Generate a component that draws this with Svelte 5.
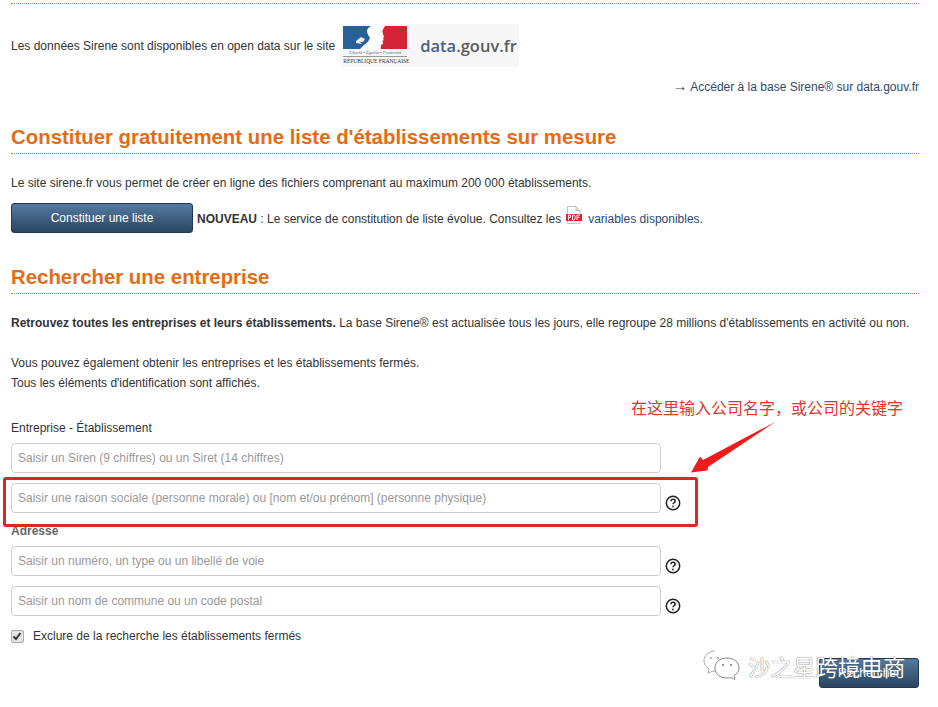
<script>
	const addressFields = [
		'Saisir un numéro, un type ou un libellé de voie',
		'Saisir un nom de commune ou un code postal'
	];
</script>

{#snippet help()}
	<svg class="help" width="16" height="16" viewBox="0 0 16 16" aria-hidden="true">
		<circle cx="8" cy="8" r="6.7" fill="#fff" stroke="#222" stroke-width="1.5" />
		<path d="M5.9 6.2c.1-1.3 1-2 2.2-2s2.1.7 2.1 1.8c0 .9-.5 1.3-1.1 1.7-.6.4-1 .8-1 1.6" fill="none" stroke="#222" stroke-width="1.5" />
		<rect x="7.2" y="10.7" width="1.6" height="1.6" fill="#222" />
	</svg>
{/snippet}

<div class="page">
	<div class="top-rule"></div>

	<div class="opendata">
		<span>Les données Sirene sont disponibles en open data sur le site</span>
		<div class="logo">
			<div class="marianne">
				<svg width="64" height="23" viewBox="0 0 64 23" aria-hidden="true">
					<rect x="0" y="0" width="28" height="23" fill="#2a6099" />
					<path d="M42 0H64V23H37l.500-4 2.500-1-1-3 2-1-2-3c1-2-1-3-.500-5z" fill="#d12535" />
					<path d="M28 0h14c-3 2-3 5-2 8l1 3-2 3 1 3-2 2-.500 4H17l4-4c3-2 5-4 6-7-1-2-3-4-3-7 0-2 2-4 4-5z" fill="#fff" />
					<path d="M13 15l5-4 4 2-2 3-3 0 2 2-6-1z" fill="#fff" opacity=".9" />
				</svg>
				<div class="devise">Liberté • Égalité • Fraternité</div>
				<div class="republique">RÉPUBLIQUE FRANÇAISE</div>
			</div>
			<div class="wordmark"><span class="d">data.</span><span class="g">gouv.fr</span></div>
		</div>
	</div>

	<p class="access"><span class="arrow">→</span> <a href="#top">Accéder à la base Sirene® sur data.gouv.fr</a></p>

	<h2 class="first">Constituer gratuitement une liste d'établissements sur mesure</h2>
	<p class="intro">Le site sirene.fr vous permet de créer en ligne des fichiers comprenant au maximum 200 000 établissements.</p>

	<div class="liste-row">
		<button class="btn liste">Constituer une liste</button>
		<span class="news"><b>NOUVEAU</b> : Le service de constitution de liste évolue. Consultez les</span>
		<svg class="pdf" width="16" height="18" viewBox="0 0 16 18" aria-hidden="true">
			<path d="M1.500 .5h8.500l4 4v13h-12.500z" fill="#fff" stroke="#c4c4c4" />
			<path d="M10 .5v4h4" fill="#e4e4e4" stroke="#bbb" />
			<rect x="0" y="8" width="16" height="7" fill="#c9302b" />
			<path d="M2.500 14v-5h2v2.500h-2M6.500 9v5h1.500l1-1v-3l-1-1zM11 14v-5h3M11 11.300h2.500" fill="none" stroke="#fff" stroke-width=".9" />
		</svg>
		<a class="vars" href="#top">variables disponibles.</a>
	</div>

	<h2>Rechercher une entreprise</h2>
	<p class="lead"><b>Retrouvez toutes les entreprises et leurs établissements.</b> La base Sirene® est actualisée tous les jours, elle regroupe 28 millions d'établissements en activité ou non.</p>
	<p class="lead-2">Vous pouvez également obtenir les entreprises et les établissements fermés.<br />Tous les éléments d'identification sont affichés.</p>

	<form class="search" onsubmit={(e) => e.preventDefault()}>
		<div class="form-label">Entreprise - Établissement</div>
		<div class="field"><input placeholder="Saisir un Siren (9 chiffres) ou un Siret (14 chiffres)" /></div>
		<div class="field"><input placeholder="Saisir une raison sociale (personne morale) ou [nom et/ou prénom] (personne physique)" />{@render help()}</div>

		<div class="form-label adresse">Adresse</div>
		{#each addressFields as placeholder}
			<div class="field"><input {placeholder} />{@render help()}</div>
		{/each}

		<label class="exclude">
			<span class="box">
				<input type="checkbox" checked />
				<svg width="12" height="12" viewBox="0 0 12 12" aria-hidden="true"><path d="M2.500 6.500l2.500 2.500 4.500-6" fill="none" stroke="#333" stroke-width="2" /></svg>
			</span>
			<span>Exclure de la recherche les établissements fermés</span>
		</label>

		<div class="submit"><button class="btn go">Rechercher</button></div>
	</form>

	<!-- annotations posees sur la capture -->
	<div class="redbox"></div>
	<div class="note">在这里输入公司名字，或公司的关键字</div>
	<svg class="note-arrow" width="90" height="56" viewBox="0 0 90 56" aria-hidden="true">
		<path d="M86 1.500L13 40l-3-3.500L1 52.500l16.500-2L18 47z" fill="#ee1c1c" />
	</svg>

	<div class="watermark">
		<svg width="38" height="31" viewBox="0 0 38 31" aria-hidden="true">
			<path d="M12 1C6 1 1 5 1 11c0 3 2 6 5 8l-1 4 5-2c1 0 2 .5 3 .5" fill="#fff" stroke="#aaa" />
			<path d="M24 8c-7 0-12 4-12 10s5 10 12 10c2 0 3 0 4-.5l4 2-1-4c3-2 5-4 5-7.500 0-6-5-10-12-10z" fill="#fff" stroke="#888" />
			<circle cx="8" cy="8" r="1.200" fill="#bbb" /><circle cx="15" cy="8" r="1.200" fill="#bbb" />
			<circle cx="20" cy="15" r="1.200" fill="#999" /><circle cx="28" cy="15" r="1.200" fill="#999" />
		</svg>
		<span>沙之星跨境电商</span>
	</div>
</div>

<style>
	:global(body) {
		margin: 0;
		background: #fff;
	}

	.page {
		position: relative;
		height: 707px;
		overflow: hidden;
		box-sizing: border-box;
		padding: 0 19px 0 11px;
		font-family: 'Liberation Sans', Arial, sans-serif;
		font-size: 12px;
		color: #333;
	}

	.top-rule {
		height: 3px;
		border-bottom: 1px dotted #b07a2a;
	}

	a {
		color: #2d4a6b;
		text-decoration: none;
	}

	.opendata {
		display: flex;
		align-items: center;
		gap: 6px;
		margin-top: 20px;
		height: 43px;
	}

	.logo {
		display: flex;
		align-items: center;
		width: 178px;
		height: 43px;
		background: #f7f7f7;
	}

	.marianne {
		width: 64px;
		margin-left: 2px;
	}

	.marianne svg {
		display: block;
	}

	.devise {
		margin-top: 1px;
		font-family: 'Liberation Serif', serif;
		font-style: italic;
		font-size: 4.500px;
		line-height: 6px;
		white-space: nowrap;
		text-align: center;
		color: #666;
		border-bottom: 1px solid #999;
	}

	.republique {
		font-family: 'Liberation Serif', serif;
		font-size: 5.500px;
		line-height: 8px;
		white-space: nowrap;
		text-align: center;
		color: #333;
	}

	.wordmark {
		margin-left: 13px;
		font-family: 'Open Sans', sans-serif;
		font-weight: 600;
		font-size: 16.500px;
	}

	.d {
		color: #47608f;
	}

	.g {
		color: #5c5c5c;
	}

	.access {
		margin: 12px 0 0;
		line-height: 16px;
		text-align: right;
	}

	.arrow {
		font-size: 15px;
		line-height: 0;
		color: #444;
	}

	h2 {
		margin: 31px 0 0;
		padding-bottom: 3px;
		border-bottom: 1px dotted #b07a2a;
		font-size: 20.400px;
		line-height: 25px;
		font-weight: 700;
		color: #e36c17;
	}

	h2.first {
		margin-top: 30px;
	}

	.intro {
		margin: 21px 0 0;
		line-height: 16px;
	}

	.liste-row {
		display: flex;
		align-items: center;
		margin-top: 12px;
		height: 30px;
	}

	.news,
	.vars {
		margin-top: 2px;
	}

	.btn {
		border: 1px solid #20384f;
		border-radius: 3px;
		background: linear-gradient(#547aa0, #2a4560);
		color: #fff;
		font-family: inherit;
		font-size: 12px;
		padding: 0;
	}

	.liste {
		width: 182px;
		height: 30px;
		margin-right: 4px;
	}

	.pdf {
		margin: -7px 6px 0 5px;
	}

	.liste-row + h2 {
		margin-top: 32px;
	}

	.lead {
		margin: 21px 0 0;
		line-height: 16px;
		white-space: nowrap;
	}

	.lead-2 {
		margin: 22px 0 0;
		line-height: 20px;
	}

	.search {
		margin-top: 27px;
	}

	.form-label {
		line-height: 16px;
		margin-bottom: 7px;
	}

	.adresse {
		margin: 4px 0 7px;
		font-weight: 700;
		color: #666;
	}

	.field {
		display: flex;
		align-items: center;
		gap: 4px;
		margin-bottom: 10px;
	}

	.field input {
		box-sizing: border-box;
		width: 650px;
		height: 30px;
		padding: 0 6px;
		border: 1px solid #ccc;
		border-radius: 4px;
		font-family: inherit;
		font-size: 12px;
		color: #333;
		background: #fff;
	}

	.field input::placeholder {
		color: #999;
		opacity: 1;
	}

	.help {
		margin-top: 10px;
	}

	.exclude {
		display: flex;
		align-items: center;
		gap: 9px;
		margin-top: 12px;
		line-height: 16px;
	}

	.box {
		position: relative;
		display: block;
		width: 13px;
		height: 13px;
	}

	.box input {
		appearance: none;
		display: block;
		box-sizing: border-box;
		width: 13px;
		height: 13px;
		margin: 0;
		border: 1px solid #aaa;
		border-radius: 2px;
		background: #e4e4e4;
	}

	.box svg {
		position: absolute;
		left: 0;
		top: 0;
	}

	.submit {
		display: flex;
		justify-content: flex-end;
		margin-top: 14px;
	}

	.go {
		width: 100px;
		height: 30px;
	}

	.redbox {
		position: absolute;
		left: 3px;
		top: 477px;
		width: 689px;
		height: 44px;
		border: 3px solid #d52b20;
		border-radius: 3px;
	}

	.note {
		position: absolute;
		left: 631px;
		top: 398px;
		font-family: 'Noto Sans CJK SC', sans-serif;
		font-size: 16px;
		line-height: 18px;
		color: #e0362c;
		white-space: nowrap;
	}

	.note-arrow {
		position: absolute;
		left: 690px;
		top: 420px;
	}

	.watermark {
		position: absolute;
		left: 703px;
		top: 650px;
		display: flex;
		align-items: center;
		gap: 7px;
		font-family: 'Noto Sans CJK SC', sans-serif;
		font-size: 22.500px;
		line-height: 30px;
		color: #fff;
		text-shadow: 0 0 1px #333;
		white-space: nowrap;
	}
</style>
